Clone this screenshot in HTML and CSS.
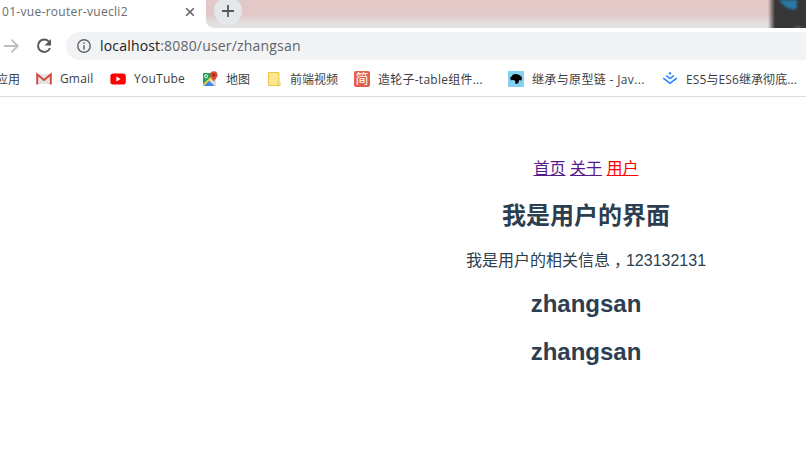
FILE: index.html
```html
<!DOCTYPE html>
<html lang="zh-CN">
<head>
<meta charset="utf-8">
<title>01-vue-router-vuecli2</title>
<link rel="stylesheet" href="styles.css">
</head>
<body>
<header class="tabstrip">
  <div class="tab">
    <span class="tab-title">01-vue-router-vuecli2</span>
    <svg class="tab-close" width="10" height="10" viewBox="0 0 10 10"><path d="M1.2 1.2l7.6 7.6M8.8 1.2l-7.6 7.6" stroke="#5f6368" stroke-width="1.6"/></svg>
  </div>
  <div class="strip-rest">
    <div class="new-tab"><svg width="28" height="28" viewBox="0 0 28 28"><path d="M14 8v12M8 14h12" stroke="#55595e" stroke-width="1.8"/></svg></div>
    <div class="desktop"><svg width="36" height="28" viewBox="0 0 36 28"><path d="M9 1L14-2h13v10l-3 2-7-2z" fill="#2878a5"/><circle cx="28" cy="32" r="6" fill="#666"/></svg></div>
  </div>
</header>
<nav class="toolbar">
  <svg class="forward" width="16" height="16" viewBox="0 0 16 16"><path d="M0 8h13M7.5 1.7L13.8 8l-6.3 6.3" fill="none" stroke="#bcbec1" stroke-width="1.8"/></svg>
  <svg class="reload" width="16" height="16" viewBox="0 0 16 16"><path d="M13.2 4A6.2 6.2 0 1 0 14 10" fill="none" stroke="#55595e" stroke-width="2"/><path d="M15 1v6.4H8.6z" fill="#55595e"/></svg>
  <div class="omnibox">
    <svg width="14" height="14" viewBox="0 0 14 14"><circle cx="7" cy="7" r="6.2" fill="none" stroke="#5f6368" stroke-width="1.4"/><path d="M7 6.2v4.2M7 3.4v1.5" stroke="#5f6368" stroke-width="1.5"/></svg>
    <span class="url"><b>localhost</b>:8080/user/zhangsan</span>
  </div>
</nav>
<nav class="bookmarks">
  <span class="bm apps">应用</span>
  <span class="bm gmail"><svg width="16" height="16" viewBox="0 0 16 16"><path d="M1 3h14v10H1z" fill="#e8e8e8"/><path d="M3 13l5-5 5 5" fill="none" stroke="#ccc"/><path d="M1.2 13.5V3.4L8 9l6.8-5.6v10.1" fill="none" stroke="#d54b3d" stroke-width="2"/></svg><span>Gmail</span></span>
  <span class="bm youtube"><svg width="16" height="16" viewBox="0 0 16 16"><rect x=".4" y="2.5" width="15.4" height="11" rx="2.8" fill="#f00"/><path d="M6.4 5.6v4.8L10.6 8z" fill="#fff"/></svg><span>YouTube</span></span>
  <span class="bm map"><svg width="16" height="16" viewBox="0 0 16 16"><rect x="1" y="2" width="13" height="13" rx="1" fill="#dadada"/><path d="M1 3q0-1 1-1h9v4L2 15l-1-1z" fill="#1da261"/><path d="M2 15l5-5 5.5 5z" fill="#4285f4"/><path d="M1 13L12 3l2 2-6 5 6 5h-1L7 10l-5 5z" fill="#f2d34d"/><path d="M2 15l5-5 5.500 5z" fill="#4285f4"/><path d="M8.500 10.500L13 15h1V7z" fill="#e0e0e0"/><circle cx="4.1" cy="5.3" r="1.5" fill="none" stroke="#fff"/><path d="M8 4a3.8 3.8 0 0 1 7.6 0c0 2.5-2.7 4-3.8 7C11 8 8 6.500 8 4z" fill="#df4b3b"/><circle cx="11.8" cy="4" r="1.4" fill="#80291f"/></svg><span>地图</span></span>
  <span class="bm folder"><svg width="13" height="16" viewBox="0 0 13 16"><path d="M.5 1.500h10.500v9l1 1v3H.5z" fill="#ffe58f" stroke="#e7c64b"/><path d="M9.500 14.500v-3l1.500-1" fill="none" stroke="#e7c64b"/></svg><span>前端视频</span></span>
  <span class="bm jianshu"><span class="jian">简</span><span>造轮子-table组件...</span></span>
  <span class="bm mdn"><svg width="16" height="16" viewBox="0 0 16 16"><path d="M0 0h16v16H0z" fill="#83d0f2"/><path d="M2 7l2-2 1-1.500 3-.6 3 .8 2.500 2L14 8l-1 1.500-2-.2-.4 2.200-1.600 1.500-2-.7.5-1.800L6 9l-3 .3z" fill="#000"/></svg><span>继承与原型链 - Jav...</span></span>
  <span class="bm juejin"><svg width="16" height="16" viewBox="0 0 16 16"><path d="M8 1l1.700 1.300L8 3.700 6.300 2.300z" fill="#1e80ff"/><path d="M4.300 4.600L8 7.500l3.700-2.900M1.200 7.200L8 12.400l6.800-5.200" fill="none" stroke="#1e80ff" stroke-width="1.5"/></svg><span>ES5与ES6继承彻底...</span></span>
</nav>
<main class="app">
  <div class="links"><a href="#">首页</a> <a href="#">关于</a> <a href="#" class="active">用户</a></div>
  <h2 class="heading">我是用户的界面</h2>
  <p>我是用户的相关信息<span class="comma">，</span>123132131</p>
  <h2>zhangsan</h2>
  <h2>zhangsan</h2>
</main>
</body>
</html>
```
FILE: styles.css
```css
* { box-sizing: border-box; }
body {
  margin: 0;
  width: 806px;
  height: 450px;
  overflow: hidden;
  background: #fff;
  font-family: "Open Sans", "Noto Sans CJK SC", sans-serif;
}
svg { display: block; flex: none; }
.tabstrip { display: flex; height: 28px; background: #fff; }
.tab {
  display: flex;
  align-items: center;
  justify-content: space-between;
  width: 206px;
  height: 23px;
  padding: 0 11px 0 2px;
}
.tab-title { font-size: 12px; line-height: 22px; color: #686c70; white-space: nowrap; letter-spacing: 0.3px; }
.strip-rest {
  display: flex;
  justify-content: space-between;
  flex: 1;
  padding-left: 8px;
  border-bottom-left-radius: 8px;
  overflow: hidden;
  background: linear-gradient(#e3c8c8 0, #e3c8c8 15px, #e2dddd 22px, #e2e2e2 28px);
}
.new-tab { width: 28px; height: 28px; margin-top: -3px; border-radius: 50%; background: #e5e8eb; }
.desktop { width: 38px; padding-left: 2px; background: linear-gradient(90deg, #36363600, #363636 7px); }
.desktop svg { filter: blur(1.2px); }
.toolbar { display: flex; align-items: center; height: 36px; padding: 0 0 0 4px; }
.reload { margin-left: 16px; }
.omnibox {
  display: flex;
  align-items: center;
  flex: 1;
  height: 28px;
  margin-left: 14px;
  padding-left: 11px;
  border-radius: 14px 0 0 14px;
  background: #f1f3f4;
}
.url { margin-left: 9px; font-size: 14px; line-height: 28px; color: #5f6368; white-space: nowrap; letter-spacing: 0.18px; }
.url b { font-weight: 400; color: #202124; }
.bookmarks {
  display: flex;
  height: 33px;
  border-bottom: 1px solid #dadce0;
  font-size: 12px;
  color: #3c4043;
}
.bm { display: flex; align-items: center; flex: none; gap: 8px; height: 29px; white-space: nowrap; }
.apps { width: 40px; margin-left: -4px; }
.gmail { width: 74px; letter-spacing: 0.15px; }
.youtube { width: 92px; letter-spacing: 0.25px; }
.map { width: 66px; }
.folder { width: 86px; gap: 9px; }
.jianshu { width: 154px; letter-spacing: 0.25px; }
.mdn { width: 154px; letter-spacing: 0.35px; }
.juejin { letter-spacing: 0.1px; }
.jian {
  width: 16px;
  height: 16px;
  border-radius: 2px;
  background: #e2604a;
  color: #fff;
  font-size: 13px;
  line-height: 15px;
  text-align: center;
  letter-spacing: 0;
}
.app {
  width: 440px;
  margin-left: 366px;
  padding-top: 61px;
  font-family: "Liberation Sans", "Noto Sans CJK SC", sans-serif;
  font-size: 16px;
  text-align: center;
  color: #2c3e50;
}
.links { height: 22px; line-height: 22px; }
.links a { color: #551a8b; }
.links .active { color: #f00; }
.app h2 { margin: 18px 0 20px; height: 28px; line-height: 28px; font-size: 24px; }
.app .heading { margin-top: 22px; }
.app p { margin: 0; height: 22px; line-height: 22px; }
.comma { margin: 0 -4px 0 4px; }
```
